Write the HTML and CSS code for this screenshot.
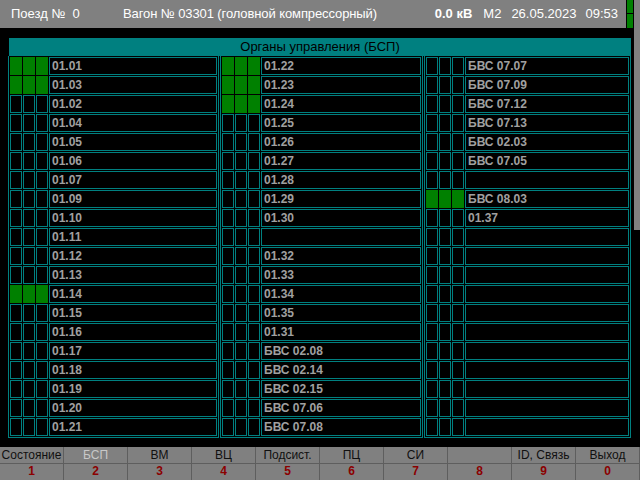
FILE: index.html
```html
<!DOCTYPE html>
<html lang="ru">
<head>
<meta charset="utf-8">
<title>Органы управления (БСП)</title>
<link rel="stylesheet" href="styles.css">
</head>
<body>
<div class="screen">
  <header class="topbar">
    <div class="info">
      <span class="train">Поезд №&nbsp; 0</span>
      <span class="wagon">Вагон № 03301 (головной компрессорный)</span>
      <span class="volt">0.0 кВ</span>
      <span class="mode">M2</span>
      <span class="date">26.05.2023</span>
      <span class="time">09:53</span>
    </div>
    <div class="indicator"><i></i><i></i></div>
    <div class="scroll"></div>
  </header>

  <main class="panel">
    <div class="panel-title">Органы управления (БСП)</div>
    <div class="columns">
      <div class="col c1">
        <div class="row on"><i></i><i></i><i></i><span>01.01</span></div>
        <div class="row on"><i></i><i></i><i></i><span>01.03</span></div>
        <div class="row"><i></i><i></i><i></i><span>01.02</span></div>
        <div class="row"><i></i><i></i><i></i><span>01.04</span></div>
        <div class="row"><i></i><i></i><i></i><span>01.05</span></div>
        <div class="row"><i></i><i></i><i></i><span>01.06</span></div>
        <div class="row"><i></i><i></i><i></i><span>01.07</span></div>
        <div class="row"><i></i><i></i><i></i><span>01.09</span></div>
        <div class="row"><i></i><i></i><i></i><span>01.10</span></div>
        <div class="row"><i></i><i></i><i></i><span>01.11</span></div>
        <div class="row"><i></i><i></i><i></i><span>01.12</span></div>
        <div class="row"><i></i><i></i><i></i><span>01.13</span></div>
        <div class="row on"><i></i><i></i><i></i><span>01.14</span></div>
        <div class="row"><i></i><i></i><i></i><span>01.15</span></div>
        <div class="row"><i></i><i></i><i></i><span>01.16</span></div>
        <div class="row"><i></i><i></i><i></i><span>01.17</span></div>
        <div class="row"><i></i><i></i><i></i><span>01.18</span></div>
        <div class="row"><i></i><i></i><i></i><span>01.19</span></div>
        <div class="row"><i></i><i></i><i></i><span>01.20</span></div>
        <div class="row"><i></i><i></i><i></i><span>01.21</span></div>
      </div>
      <div class="col c2">
        <div class="row on"><i></i><i></i><i></i><span>01.22</span></div>
        <div class="row on"><i></i><i></i><i></i><span>01.23</span></div>
        <div class="row on"><i></i><i></i><i></i><span>01.24</span></div>
        <div class="row"><i></i><i></i><i></i><span>01.25</span></div>
        <div class="row"><i></i><i></i><i></i><span>01.26</span></div>
        <div class="row"><i></i><i></i><i></i><span>01.27</span></div>
        <div class="row"><i></i><i></i><i></i><span>01.28</span></div>
        <div class="row"><i></i><i></i><i></i><span>01.29</span></div>
        <div class="row"><i></i><i></i><i></i><span>01.30</span></div>
        <div class="row"><i></i><i></i><i></i><span></span></div>
        <div class="row"><i></i><i></i><i></i><span>01.32</span></div>
        <div class="row"><i></i><i></i><i></i><span>01.33</span></div>
        <div class="row"><i></i><i></i><i></i><span>01.34</span></div>
        <div class="row"><i></i><i></i><i></i><span>01.35</span></div>
        <div class="row"><i></i><i></i><i></i><span>01.31</span></div>
        <div class="row"><i></i><i></i><i></i><span>БВС 02.08</span></div>
        <div class="row"><i></i><i></i><i></i><span>БВС 02.14</span></div>
        <div class="row"><i></i><i></i><i></i><span>БВС 02.15</span></div>
        <div class="row"><i></i><i></i><i></i><span>БВС 07.06</span></div>
        <div class="row"><i></i><i></i><i></i><span>БВС 07.08</span></div>
      </div>
      <div class="col c3">
        <div class="row"><i></i><i></i><i></i><span>БВС 07.07</span></div>
        <div class="row"><i></i><i></i><i></i><span>БВС 07.09</span></div>
        <div class="row"><i></i><i></i><i></i><span>БВС 07.12</span></div>
        <div class="row"><i></i><i></i><i></i><span>БВС 07.13</span></div>
        <div class="row"><i></i><i></i><i></i><span>БВС 02.03</span></div>
        <div class="row"><i></i><i></i><i></i><span>БВС 07.05</span></div>
        <div class="row"><i></i><i></i><i></i><span></span></div>
        <div class="row on"><i></i><i></i><i></i><span>БВС 08.03</span></div>
        <div class="row"><i></i><i></i><i></i><span>01.37</span></div>
        <div class="row"><i></i><i></i><i></i><span></span></div>
        <div class="row"><i></i><i></i><i></i><span></span></div>
        <div class="row"><i></i><i></i><i></i><span></span></div>
        <div class="row"><i></i><i></i><i></i><span></span></div>
        <div class="row"><i></i><i></i><i></i><span></span></div>
        <div class="row"><i></i><i></i><i></i><span></span></div>
        <div class="row"><i></i><i></i><i></i><span></span></div>
        <div class="row"><i></i><i></i><i></i><span></span></div>
        <div class="row"><i></i><i></i><i></i><span></span></div>
        <div class="row"><i></i><i></i><i></i><span></span></div>
        <div class="row"><i></i><i></i><i></i><span></span></div>
      </div>
    </div>
  </main>

  <footer class="fkeys">
    <div class="key"><span class="lbl">Состояние</span><b>1</b></div>
    <div class="key active"><span class="lbl">БСП</span><b>2</b></div>
    <div class="key"><span class="lbl">ВМ</span><b>3</b></div>
    <div class="key"><span class="lbl">ВЦ</span><b>4</b></div>
    <div class="key"><span class="lbl">Подсист.</span><b>5</b></div>
    <div class="key"><span class="lbl">ПЦ</span><b>6</b></div>
    <div class="key"><span class="lbl">СИ</span><b>7</b></div>
    <div class="key"><span class="lbl"></span><b>8</b></div>
    <div class="key"><span class="lbl">ID, Связь</span><b>9</b></div>
    <div class="key"><span class="lbl">Выход</span><b>0</b></div>
  </footer>
</div>
</body>
</html>
```

FILE: styles.css
```css
* { box-sizing: border-box; }

html, body {
  margin: 0;
  padding: 0;
  background: #000;
}

body {
  font-family: "Liberation Sans", Arial, sans-serif;
}

.screen {
  width: 640px;
  height: 480px;
  overflow: hidden;
  display: flex;
  flex-direction: column;
  background: #000;
}

/* ---------- top bar ---------- */
.topbar {
  display: flex;
  align-items: flex-start;
  height: 28px;
  flex: none;
}

.info {
  width: 626px;
  height: 28px;
  background: #808080;
  color: #fff;
  font-size: 13px;
  display: flex;
  align-items: center;
  padding: 0 8px 1px 11px;
  white-space: nowrap;
}

.train { width: 112px; }
.wagon { letter-spacing: -0.1px; }
.volt { margin-left: auto; font-weight: bold; }
.mode { margin-left: 11px; }
.date { margin-left: 10px; }
.time { margin-left: 9px; }

.indicator {
  width: 6px;
  height: 28px;
  margin-left: 1px;
  display: flex;
  flex-direction: column;
  gap: 1px;
}
.indicator i {
  display: block;
  background: #008000;
  height: 13px;
}
.indicator i + i { height: 14px; }

.scroll {
  width: 6px;
  height: 230px;
  margin-left: 1px;
  background: #808080;
}

/* ---------- panel ---------- */
.panel {
  margin: 10px 0 0 8px;
  width: 623px;
  flex: none;
}

.panel-title {
  height: 18px;
  margin-left: 1px;
  background: #008080;
  color: #000;
  font-size: 13px;
  line-height: 18px;
  text-align: center;
}

.columns {
  display: grid;
  grid-template-columns: 211px 203px 207px;
  column-gap: 1px;
}

.col {
  border: 1px solid #008080;
  border-top: none;
  padding: 1px;
  display: flex;
  flex-direction: column;
  gap: 1px;
}

.row {
  display: flex;
  gap: 1px;
  height: 18px;
}

.row i {
  width: 12px;
  border: 1px solid #008080;
  flex: none;
}

.row.on i {
  background: #008000;
  border-color: #008000;
}

.row span {
  flex: 1;
  border: 1px solid #008080;
  padding-left: 2px;
  font-size: 12px;
  font-weight: bold;
  line-height: 16px;
  color: #a0a0a0;
  white-space: nowrap;
}

/* ---------- function keys ---------- */
.fkeys {
  margin-top: auto;
  height: 33px;
  display: grid;
  grid-template-columns: repeat(10, 64px);
  background: #808080;
  flex: none;
}

.key {
  display: flex;
  flex-direction: column;
  border-right: 1px solid #5e5e5e;
}

.key .lbl {
  height: 17px;
  border-bottom: 1px solid #5e5e5e;
  font-size: 12px;
  line-height: 16px;
  text-align: center;
  color: #101010;
  white-space: nowrap;
}

.key.active .lbl { color: #c8c8c8; }

.key b {
  flex: 1;
  font-size: 12px;
  line-height: 15px;
  text-align: center;
  color: #8b0000;
}
```
